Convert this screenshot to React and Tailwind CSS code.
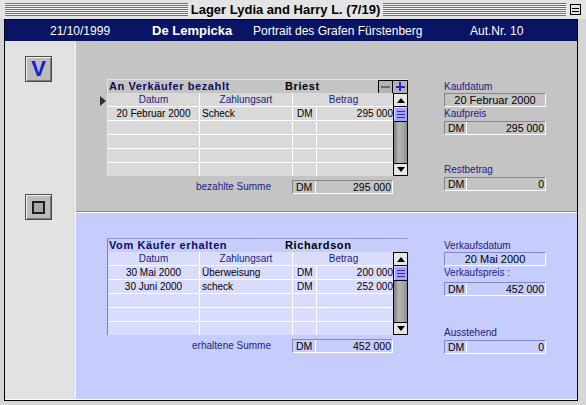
import React from "react";

const topRows = [{ date: "20 Februar 2000", type: "Scheck", amount: "295 000" }];
const bottomRows = [
	{ date: "30 Mai 2000", type: "Überweisung", amount: "200 000" },
	{ date: "30 Juni 2000", type: "scheck", amount: "252 000" },
];

const themes = {
	gray: {
		section: "bg-[#c4c4c4]",
		row: "bg-[#d9d9d9]",
		title: "border-t-[#e4e4e4] border-l-[#e4e4e4]",
		box: "border-t-[#858585] border-l-[#858585] border-b-white border-r-white",
		priceLabel: "h-[14px]",
		restLabel: "mt-[28px]",
	},
	blue: {
		section: "bg-[#c6ccfc]",
		row: "bg-[#dadcfd]",
		title: "border-t-[#8e96e0] border-l-[#7880cc]",
		box: "border-t-[#8088cc] border-l-[#8088cc] border-b-white border-r-white",
		priceLabel: "h-[16px]",
		restLabel: "mt-[30px]",
	},
};

const Arrow = ({ up }) => (
	<svg width="8" height="5" viewBox="0 0 8 5">
		<path d={up ? "M0 5 L4 0 L8 5Z" : "M0 0 L4 5 L8 0Z"} fill="#000" />
	</svg>
);

const Scrollbar = () => (
	<div className="w-[15px] h-[83px] flex flex-col border border-black bg-[#a6a6a6]">
		<div className="h-[13px] bg-[#e6e6e6] border-b border-black flex items-center justify-center">
			<Arrow up />
		</div>
		<div className="h-[15px] bg-[#a4a4ff] border-b border-black flex flex-col items-center justify-center gap-[2px] shadow-[inset_1px_1px_0_#d8d8ff]">
			<div className="w-[8px] h-px bg-[#3030a0]" />
			<div className="w-[8px] h-px bg-[#3030a0]" />
			<div className="w-[8px] h-px bg-[#3030a0]" />
		</div>
		<div className="flex-1 bg-[linear-gradient(to_right,#7c7c7c,#b4b4b4_35%,#a8a8a8_70%,#8c8c8c)]" />
		<div className="h-[12px] bg-[#e6e6e6] border-t border-black flex items-center justify-center">
			<Arrow />
		</div>
	</div>
);

const PlusMinus = () => (
	<div className="flex h-[14px]">
		<div className="w-[15px] border border-black bg-[#b4b4b4] flex items-center justify-center">
			<div className="w-[9px] h-[2px] bg-[#6c6c6c]" />
		</div>
		<div className="w-[15px] border border-l-0 border-black bg-[#b4b4b4] flex items-center justify-center relative">
			<div className="w-[9px] h-[2px] bg-[#2424d0]" />
			<div className="absolute w-[2px] h-[9px] bg-[#2424d0]" />
		</div>
	</div>
);

const Ledger = ({ theme, title, name, rows, marker, buttons, sumLabel, sum }) => {
	const t = themes[theme];
	const lines = [0, 1, 2, 3, 4].map((i) => rows[i] || null);
	return (
		<div className="flex">
			<div className="w-[8px] pt-[17px] pl-[1px]">
				{marker && (
					<svg width="6" height="10" viewBox="0 0 6 10">
						<path d="M0 0 L6 5 L0 10Z" fill="#303030" />
					</svg>
				)}
			</div>
			<div className="w-[301px]">
				<div className={`h-[14px] flex items-center border-t border-l ${t.title}`}>
					<span className="w-[177px] pl-[1px] font-bold text-[11px] tracking-[0.6px] text-[#0c0c5c] leading-none">
						{title}
					</span>
					<span className="flex-1 font-bold text-[11px] tracking-[0.6px] text-black leading-none">{name}</span>
					{buttons && <PlusMinus />}
				</div>
				<div className="flex">
					<div className={`w-[286px] border-l ${t.title}`}>
						<div className={`h-[14px] grid grid-cols-[92px_93px_101px] border-b border-white text-[10px] text-[#1c1c84] leading-[13px] ${t.row}`}>
							<div className="text-center border-r border-white">Datum</div>
							<div className="text-center border-r border-white">Zahlungsart</div>
							<div className="text-center">Betrag</div>
						</div>
						{lines.map((r, i) => (
							<div
								key={i}
								className={`${i === 4 ? "h-[13px]" : "h-[14px] border-b border-white"} grid grid-cols-[92px_93px_24px_77px] text-[10px] text-black leading-[13px] ${t.row}`}
							>
								<div className="text-center border-r border-white">{r?.date}</div>
								<div className="pl-[2px] border-r border-white">{r?.type}</div>
								<div className="pl-[4px] border-r border-white">{r && "DM"}</div>
								<div className="text-right pr-[1px]">{r?.amount}</div>
							</div>
						))}
					</div>
					<Scrollbar />
				</div>
				<div className="w-[286px] mt-[3px] flex items-center justify-end">
					<span className="text-[10px] text-[#1c1c84] mr-[21px]">{sumLabel}</span>
					<MoneyBox theme={theme} value={sum} wide />
				</div>
			</div>
		</div>
	);
};

const MoneyBox = ({ theme, value, wide }) => (
	<div className={`h-[14px] flex border ${themes[theme].box} ${wide ? "w-[101px]" : "w-[102px]"} text-[10.5px] leading-[12px]`}>
		<div className={`${wide ? "w-[23px]" : "w-[22px]"} pl-[3px] border-r border-white`}>DM</div>
		<div className="flex-1 text-right pr-[1px]">{value}</div>
	</div>
);

const DateBox = ({ theme, value }) => (
	<div className={`h-[14px] w-[102px] border ${themes[theme].box} text-[11px] leading-[12px] text-center`}>
		{value}
	</div>
);

const Label = ({ children, className = "" }) => (
	<div className={`text-[10px] leading-[13px] text-[#1c1c84] ${className}`}>{children}</div>
);

const Section = ({ theme, ledger, fields, className }) => (
	<div className={`flex pl-[23px] ${themes[theme].section} ${className}`}>
		<Ledger theme={theme} {...ledger} />
		<div className="ml-[36px] w-[103px] mt-[1px]">
			<Label className="h-[13px]">{fields.dateLabel}</Label>
			<DateBox theme={theme} value={fields.date} />
			<Label className={themes[theme].priceLabel}>{fields.priceLabel}</Label>
			<MoneyBox theme={theme} value={fields.price} />
			<Label className={`h-[14px] ${themes[theme].restLabel}`}>{fields.restLabel}</Label>
			<MoneyBox theme={theme} value={fields.rest} />
		</div>
	</div>
);

const Stripes = () => (
	<div className="flex-1 h-[13px] bg-[repeating-linear-gradient(to_bottom,#6e6e6e_0px,#6e6e6e_1px,#f4f4f4_1px,#f4f4f4_2px)]" />
);

const SideButton = ({ children }) => (
	<div className="w-[27px] h-[26px] border border-[#4a4a4a] bg-[#bcbcbc] shadow-[inset_1px_1px_0_#f4f4f4,inset_-1px_-1px_0_#7a7a7a] flex items-center justify-center">
		{children}
	</div>
);

export default function App() {
	return (
		<div className="w-[586px] h-[405px] bg-[#d6d6d6] font-['Liberation_Sans',Arial,sans-serif] overflow-hidden">
			<div className="h-[19px] flex items-center pl-[5px] pr-[5px] bg-[#e4e4e4]">
				<Stripes />
				<span className="mx-[3px] text-[13px] font-bold text-black leading-none">Lager Lydia and Harry L. (7/19)</span>
				<Stripes />
				<div className="ml-[4px] w-[11px] h-[11px] border border-black bg-[#e4e4e4] flex flex-col justify-center gap-[2px] px-[1px]">
					<div className="h-px bg-black" />
					<div className="h-px bg-black" />
				</div>
			</div>
			<div className="ml-[4px] mr-[8px] h-[382px] border border-black flex flex-col">
				<div className="h-[21px] bg-[#0a1464] text-white flex items-center pl-[45px]">
					<span className="w-[102px] text-[12px]">21/10/1999</span>
					<span className="w-[101px] text-[13px] font-bold">De Lempicka</span>
					<span className="w-[217px] text-[12px]">Portrait des Grafen Fürstenberg</span>
					<span className="text-[12px]">Aut.Nr. 10</span>
				</div>
				<div className="flex-1 flex border-b border-white">
					<div className="w-[71px] bg-[#e2e2e2] border-r border-[#f2f2f2] pl-[20px] pt-[15px]">
						<SideButton>
							<span className="text-[22px] font-bold text-[#1a1ad8] leading-none">V</span>
						</SideButton>
						<div className="mt-[112px]">
							<SideButton>
								<div className="w-[13px] h-[13px] border-2 border-[#1e1e1e] bg-[#a8a8a8]" />
							</SideButton>
						</div>
					</div>
					<div className="flex-1 flex flex-col">
						<Section
							theme="gray"
							className="h-[171px] pt-[38px] border-b border-[#8a8a8a]"
							ledger={{
								title: "An Verkäufer bezahlt",
								name: "Briest",
								rows: topRows,
								marker: true,
								buttons: true,
								sumLabel: "bezahlte Summe",
								sum: "295 000",
							}}
							fields={{
								dateLabel: "Kaufdatum",
								date: "20 Februar 2000",
								priceLabel: "Kaufpreis",
								price: "295 000",
								restLabel: "Restbetrag",
								rest: "0",
							}}
						/>
						<Section
							theme="blue"
							className="flex-1 pt-[25px] border-t border-white"
							ledger={{
								title: "Vom Käufer erhalten",
								name: "Richardson",
								rows: bottomRows,
								sumLabel: "erhaltene Summe",
								sum: "452 000",
							}}
							fields={{
								dateLabel: "Verkaufsdatum",
								date: "20 Mai 2000",
								priceLabel: "Verkaufspreis :",
								price: "452 000",
								restLabel: "Ausstehend",
								rest: "0",
							}}
						/>
					</div>
				</div>
			</div>
		</div>
	);
}
